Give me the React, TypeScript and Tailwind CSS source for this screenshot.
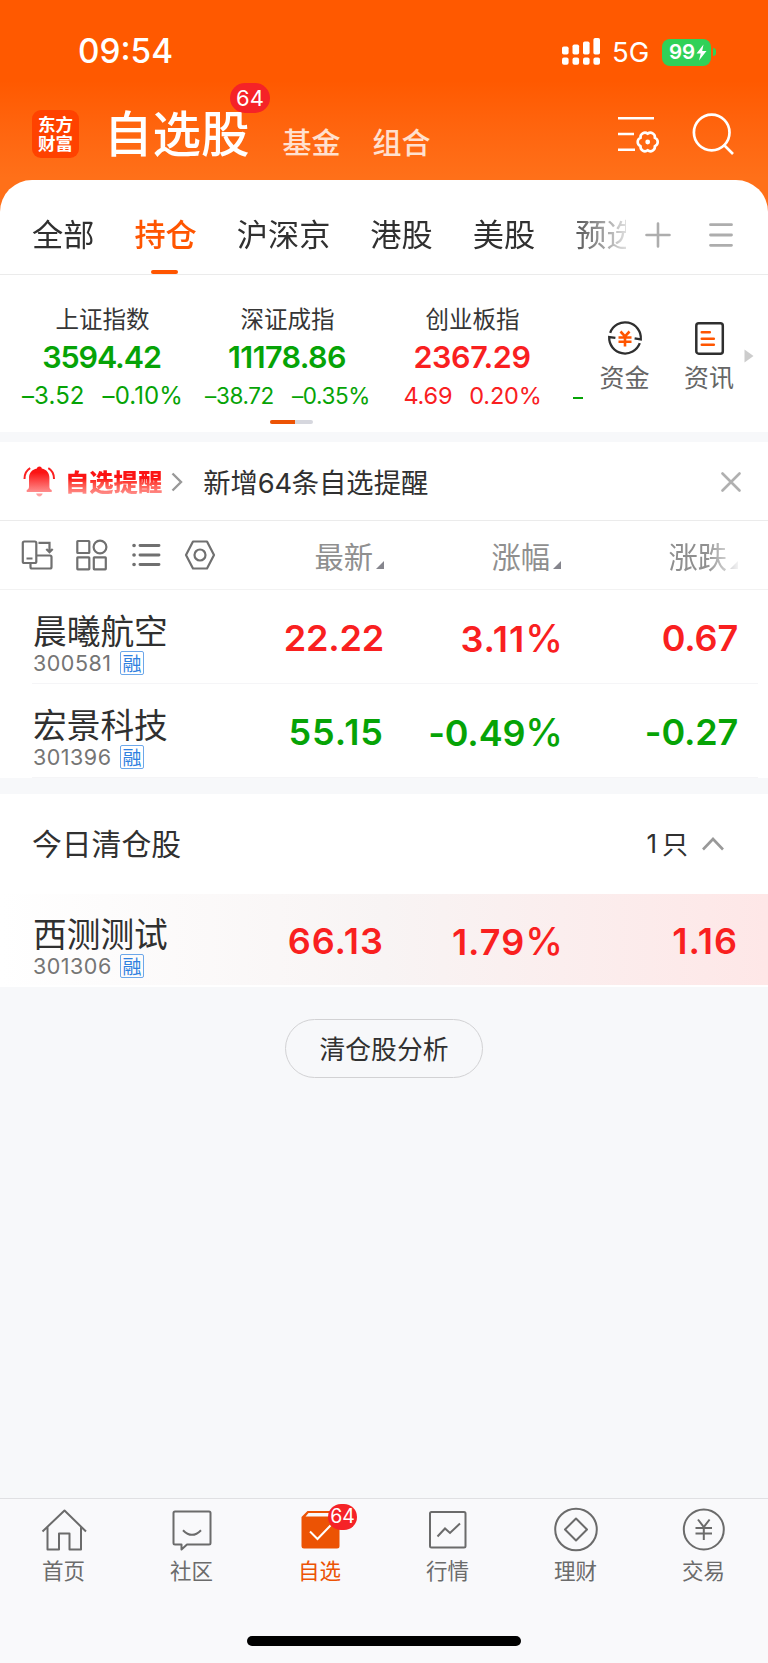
import type { ReactNode } from 'react'

type Trend = 'up' | 'down'

interface Stock {
  name: string
  code: string
  price: string
  percent: string
  change: string
  trend: Trend
}

const TREND_COLORS: Record<Trend, string> = {
  up: 'text-[#f9201f]',
  down: 'text-[#06a306]',
}

const TABS = ['全部', '持仓', '沪深京', '港股', '美股', '预选']

const INDICES: {
  name: string
  value: string
  change: string
  percent: string
  trend: Trend
  valueClass: string
  changeClass: string
}[] = [
  {
    name: '上证指数',
    value: '3594.42',
    change: '–3.52',
    percent: '–0.10%',
    trend: 'down',
    valueClass: 'tracking-[-1.1px] pr-[2px]',
    changeClass: 'gap-[18px] text-[24px] tracking-[0.1px]',
  },
  {
    name: '深证成指',
    value: '11178.86',
    change: '–38.72',
    percent: '–0.35%',
    trend: 'down',
    valueClass: 'tracking-[-0.6px] pr-px',
    changeClass: 'gap-[18px] text-[22.5px] tracking-[-0.4px]',
  },
  {
    name: '创业板指',
    value: '2367.29',
    change: '4.69',
    percent: '0.20%',
    trend: 'up',
    valueClass: 'tracking-[-0.4px] pr-px',
    changeClass: 'gap-[17px] text-[23.5px] tracking-[-0.2px]',
  },
]

const HOLDINGS: Stock[] = [
  { name: '晨曦航空', code: '300581', price: '22.22', percent: '3.11', change: '0.67', trend: 'up' },
  { name: '宏景科技', code: '301396', price: '55.15', percent: '-0.49', change: '-0.27', trend: 'down' },
]

const CLEARED: Stock = {
  name: '西测测试',
  code: '301306',
  price: '66.13',
  percent: '1.79',
  change: '1.16',
  trend: 'up',
}

function StatusBar() {
  return (
    <div className="flex h-[104px] items-center pl-[78px] text-white font-['Inter',sans-serif]">
      <span className="w-[484px] text-[33.3px] leading-none font-medium">09:54</span>
      <svg width="38" height="28" viewBox="0 0 38 28" fill="#fff">
        <rect x="0" y="8.5" width="6.6" height="8" rx="1.8" />
        <rect x="10.5" y="6.5" width="6.6" height="10" rx="1.8" />
        <rect x="21" y="3.5" width="6.6" height="13" rx="1.8" />
        <rect x="31.4" y="0" width="6.6" height="16.5" rx="1.8" />
        <rect x="0" y="19.5" width="6.6" height="7.2" rx="2" />
        <rect x="10.5" y="19.5" width="6.6" height="7.2" rx="2" />
        <rect x="21" y="19.5" width="6.6" height="7.2" rx="2" />
        <rect x="31.4" y="19.5" width="6.6" height="7.2" rx="2" />
      </svg>
      <span className="ml-[12px] w-[50px] pt-px text-[27.5px] leading-none">5G</span>
      <div className="flex h-[27px] w-[49px] items-center justify-center rounded-[8px] bg-[#30d158]">
        <span className="ml-[3px] text-[20.5px] leading-none font-semibold">99</span>
        <svg width="11" height="17" viewBox="0 0 11 17" fill="#fff" className="ml-px">
          <path d="M7.5 0.5 0.5 9.5h4.2L3 16.5l7.5-9.6H6.2z" />
        </svg>
      </div>
      <div className="ml-[2px] h-[8px] w-[3px] rounded-r-full bg-[#30d158]" />
    </div>
  )
}

function TitleBar() {
  return (
    <div className="flex h-[76px] items-start pl-8 text-white">
      <div className="mt-[6px] flex h-[48px] w-[47px] flex-col items-center justify-center rounded-[9px] bg-[#ff4200] pb-[2px] text-[17.5px] leading-[19.5px] font-bold">
        <span>东方</span>
        <span>财富</span>
      </div>
      <div className="relative ml-[25px]">
        <h1 className="mt-px text-[48.5px] leading-[52px] font-medium whitespace-nowrap">自选股</h1>
        <span className="absolute -top-[21px] left-[126px] flex h-[30px] w-[40px] items-center justify-center rounded-full bg-[#f52327] text-[22px] leading-none font-['Inter',sans-serif]">
          64
        </span>
      </div>
      <span className="mt-[21px] ml-[33px] text-[29px] leading-[32px] font-medium text-white/80">基金</span>
      <span className="mt-[21px] ml-[32px] text-[29px] leading-[32px] font-medium text-white/80">组合</span>
      <svg
        className="mt-[9px] ml-[187px]"
        width="42"
        height="42"
        viewBox="0 0 42 42"
        fill="none"
        stroke="#fff"
        strokeWidth="2.6"
      >
        <path d="M0 5.3h36M0 21h16M0 36.8h17" />
        <path
          transform="translate(29.7 29)"
          strokeLinejoin="round"
          d="M7.1-4.1C11-2.7 11 2.7 7.1 4.1C7.9 8.1 3.1 10.9 0 8.2C-3.1 10.9-7.9 8.1-7.1 4.1C-11 2.7-11-2.7-7.1-4.1C-7.9-8.1-3.1-10.9 0-8.2C3.1-10.9 7.9-8.1 7.1-4.1z"
        />
        <circle cx="29.7" cy="29" r="2.4" fill="#fff" stroke="none" />
      </svg>
      <svg
        className="mt-[9px] ml-[32px]"
        width="42"
        height="42"
        viewBox="0 0 42 42"
        fill="none"
        stroke="#fff"
        strokeWidth="2.7"
      >
        <circle cx="19.7" cy="19.5" r="17.8" />
        <path d="M31.5 31.5 41 41" />
      </svg>
    </div>
  )
}

function TabBar() {
  return (
    <div className="flex h-[95px] items-center border-b border-[#ebebeb] pl-8">
      <div className="flex h-full w-[594px] gap-[40px] overflow-hidden [mask-image:linear-gradient(to_right,#000_530px,transparent_606px)]">
        {TABS.map((tab) => (
          <div
            key={tab}
            className={`relative flex h-full shrink-0 items-center pb-[2px] text-[31.2px] leading-none ${
              tab === '持仓' ? 'font-medium text-[#ff5500]' : 'text-[#303030]'
            }`}
          >
            <span className="pt-[14px]">{tab}</span>
            {tab === '持仓' && (
              <span className="absolute bottom-0 left-[17px] h-[4px] w-[27px] rounded-full bg-[#ff5500]" />
            )}
          </div>
        ))}
      </div>
      <svg className="mt-[15px] ml-[19px]" width="26" height="26" viewBox="0 0 26 26" stroke="#adadad" strokeWidth="2.6" strokeLinecap="round">
        <path d="M1.5 13h23M13 1.5v23" />
      </svg>
      <svg className="mt-[15px] ml-[38px]" width="24" height="26" viewBox="0 0 24 26" stroke="#adadad" strokeWidth="2.8" strokeLinecap="round">
        <path d="M1.5 2.7h21M1.5 13h21M1.5 23.3h21" />
      </svg>
    </div>
  )
}

function IndexPanel() {
  return (
    <div className="flex h-[157px] pl-[10px]">
      <div className="relative flex h-full w-[573px] overflow-hidden">
        {INDICES.map((item) => (
          <div key={item.name} className="flex w-[185px] shrink-0 flex-col items-center pt-[30px] whitespace-nowrap">
            <div className="text-[23.5px] leading-[26px] text-[#363636]">{item.name}</div>
            <div
              className={`mt-[9px] text-[30.5px] leading-[34px] font-semibold font-['Inter',sans-serif] ${item.valueClass} ${TREND_COLORS[item.trend]}`}
            >
              {item.value}
            </div>
            <div
              className={`mt-[9px] flex leading-[26px] font-['Inter',sans-serif] ${item.changeClass} ${TREND_COLORS[item.trend]}`}
            >
              <span>{item.change}</span>
              <span>{item.percent}</span>
            </div>
          </div>
        ))}
        <span className="mt-[122px] ml-[8px] h-[2px] w-[10px] self-start bg-[#06a306]" />
        <div className="absolute top-[145px] left-[260px] flex h-[4px] w-[43px] overflow-hidden rounded-full bg-[#d6d7de]">
          <div className="w-[25px] bg-[#ec5304]" />
        </div>
      </div>
      <div className="ml-[17px] flex w-[50px] flex-col items-center pt-[45px] text-[25px] leading-[28px] whitespace-nowrap text-[#666]">
        <svg width="36" height="36" viewBox="0 0 36 36" fill="none" strokeWidth="2.3">
          <path stroke="#2f2f2f" d="M3.2 12.8A15.8 15.8 0 0 1 33.8 19.5L27.6 18.3M32.8 23.2A15.8 15.8 0 0 1 2.2 17L8.4 17.9" />
          <path stroke="#ff5500" strokeWidth="2.6" d="M13.5 11.5 18 16.3l4.5-4.8M11.5 17.5h13M11.5 21.7h13M18 16v10.5" />
        </svg>
        <span className="mt-[6px] mr-px">资金</span>
      </div>
      <div className="ml-[34px] flex w-[50px] flex-col items-center pt-[45px] text-[25px] leading-[28px] whitespace-nowrap text-[#666]">
        <svg width="36" height="36" viewBox="0 0 36 36" fill="none">
          <rect x="5.3" y="3.3" width="26.5" height="30.4" rx="2.5" stroke="#2f2f2f" strokeWidth="2.5" />
          <path stroke="#ff5500" strokeWidth="2.6" strokeLinecap="round" d="M10.8 12.3h8M10.8 18.7h12M10.8 24.7h12" />
        </svg>
        <span className="mt-[6px]">资讯</span>
      </div>
      <svg className="mt-[74px] ml-[10px]" width="10" height="14" viewBox="0 0 10 14">
        <path d="M0.5 0.5 9.5 7 0.5 13.5z" fill="#ccc" />
      </svg>
    </div>
  )
}

function AlertBar() {
  return (
    <div className="flex h-[79px] items-center border-b border-[#ebebeb] bg-white pt-[2px] pl-[23px]">
      <svg width="32" height="32" viewBox="0 0 32 32" fill="none">
        <defs>
          <linearGradient id="bell" x1="0" y1="0" x2="0" y2="1">
            <stop offset="0.2" stopColor="#fb1414" />
            <stop offset="1" stopColor="#ffa9a9" />
          </linearGradient>
        </defs>
        <path
          fill="url(#bell)"
          d="M16.5 0.5c1.4 0 2.2 0.8 2.3 2 4.8 1 7.6 4.4 7.6 9.3v8.7c0 1.8 0.7 2.8 2.3 3.6v1.8H3.7v-1.8c1.6-0.8 2.3-1.8 2.3-3.6v-8.7c0-4.9 3-8.3 7.9-9.3 0.2-1.2 1.2-2 2.6-2zM13.2 27.5h6.4c-0.4 1.8-1.5 2.9-3.2 2.9s-2.8-1.1-3.2-2.9z"
        />
        <path stroke="#fb2020" strokeWidth="2" d="M1.5 13C1.5 8 3.7 4.2 7.2 2.2M31 13C31 8 28.8 4.2 25.3 2.2" />
      </svg>
      <span className="ml-[10px] bg-linear-to-b from-[#fb1414] from-40% to-[#ff9c9c] bg-clip-text pb-[2px] text-[24.3px] leading-[28px] font-black text-transparent">
        自选提醒
      </span>
      <svg className="ml-[9px]" width="12" height="20" viewBox="0 0 12 20" fill="none" stroke="#999" strokeWidth="2.4">
        <path d="M1.5 1.5 10 10 1.5 18.5" />
      </svg>
      <span className="ml-[20px] w-[518px] text-[27.3px] leading-[32px] whitespace-nowrap text-[#303030]">
        新增<span className="tracking-[-0.3px] font-['Inter',sans-serif]">64</span>条自选提醒
      </span>
      <svg width="20" height="20" viewBox="0 0 20 20" stroke="#b0b0b0" strokeWidth="2.6" strokeLinecap="round">
        <path d="M1.5 1.5l17 17M18.5 1.5l-17 17" />
      </svg>
    </div>
  )
}

function SortHeading({ label, className = '' }: { label: string; className?: string }) {
  return (
    <div className={`flex items-center justify-end ${className}`}>
      <span className="mr-[3px] pb-px text-[29.3px] leading-[34px] whitespace-nowrap">{label}</span>
      <svg className="mt-[20px]" width="8" height="8" viewBox="0 0 8 8">
        <path d="M8 0v8H0z" fill="#85858d" />
      </svg>
    </div>
  )
}

function ColumnHeader() {
  return (
    <div className="flex h-[69px] items-center border-b border-[#f2f2f2] bg-white pl-[20px] text-[#8f8f8f]">
      <div className="flex w-[196px] items-center justify-between">
        <svg width="34" height="32" viewBox="0 0 34 32" fill="none" stroke="#707070" strokeWidth="2.2">
          <rect x="2.8" y="2.5" width="13.5" height="21.5" rx="1.5" />
          <path d="M6.5 19.5h6M18.5 3.8h11v9M26.3 10l3.2 3.2 3.2-3.2" />
          <path d="M10.5 24.5V28q0 1.5 1.5 1.5h18q1.5 0 1.5-1.5V18q0-1.5-1.5-1.5H16.5" />
        </svg>
        <svg width="32" height="32" viewBox="0 0 32 32" fill="none" stroke="#707070" strokeWidth="2.2">
          <rect x="1.3" y="2" width="12" height="12" rx="0.5" />
          <circle cx="24" cy="8" r="6.4" />
          <rect x="1.3" y="18.3" width="12" height="12" rx="0.5" />
          <rect x="17.8" y="18.3" width="12" height="12" rx="0.5" />
        </svg>
        <svg width="32" height="32" viewBox="0 0 32 32" stroke="#707070" strokeWidth="2.9" strokeLinecap="round">
          <path d="M10 6.5h19M10 16h19M10 25.5h19" />
          <path strokeWidth="3.6" d="M4 6.5h.1M4 16h.1M4 25.5h.1" />
        </svg>
        <svg width="32" height="32" viewBox="0 0 32 32" fill="none" stroke="#707070" strokeWidth="2.2">
          <path strokeLinejoin="round" d="M9 2.5h14L30 16l-7 13.5H9L2 16z" />
          <circle cx="16" cy="16" r="5.5" />
        </svg>
      </div>
      <SortHeading label="最新" className="w-[168px]" />
      <SortHeading label="涨幅" className="w-[177px]" />
      <SortHeading
        label="涨跌"
        className="w-[177px] [mask-image:linear-gradient(to_right,#000_145px,rgba(0,0,0,0.1)_177px)]"
      />
    </div>
  )
}

// Inter's "1" is narrow, so numbers that hold one are spaced out a little
function spacing(value: string) {
  return value.includes('1') ? 'tracking-[1px]' : 'tracking-[-0.2px]'
}

function StockCells({ stock }: { stock: Stock }) {
  return (
    <>
      <div className="w-[150px] pt-[22px] pl-px">
        <div className="text-[33.7px] leading-[34px] whitespace-nowrap text-[#303030]">{stock.name}</div>
        <div className="mt-[4px] flex items-center">
          <span className="w-[87px] text-[21.5px] leading-[24px] tracking-[0.5px] text-[#757575] font-['Inter',sans-serif]">
            {stock.code}
          </span>
          <span className="flex h-[24px] w-[24px] items-center justify-center rounded-[2px] border border-[#6ca7ea] pb-[2px] text-[19px] leading-none text-[#2f80e0]">
            融
          </span>
        </div>
      </div>
      <div
        className={`flex pt-[26px] text-right text-[36px] leading-[42px] font-semibold font-['Inter',sans-serif] ${TREND_COLORS[stock.trend]}`}
      >
        <span className={`w-[202px] ${spacing(stock.price)}`}>{stock.price}</span>
        <span className={`w-[179px] ${spacing(stock.percent)}`}>
          {stock.percent}
          <span className="text-[38px] font-medium tracking-normal">%</span>
        </span>
        <span className={`w-[175px] ${spacing(stock.change)}`}>{stock.change}</span>
      </div>
    </>
  )
}

function TabIcon({ children }: { children: ReactNode }) {
  return (
    <svg width="46" height="46" viewBox="0 0 46 46" fill="none" stroke="#6b6b6b" strokeWidth="2">
      {children}
    </svg>
  )
}

const NAV_ITEMS: { label: string; icon: ReactNode; badge?: string }[] = [
  {
    label: '首页',
    icon: <path strokeLinejoin="round" d="M1.5 24.5 23.5 3.5l21.5 21M6.5 20v22.5H18v-16h10.5v16H40V20" />,
  },
  {
    label: '社区',
    icon: (
      <>
        <path strokeLinejoin="round" d="M6 4.5h34q1.5 0 1.5 1.5v30q0 1.5-1.5 1.5H18l-5.5 5v-5H6Q4.5 37.5 4.5 36V6q0-1.5 1.5-1.5z" />
        <path d="M14 23.2q9 9.3 18 0" />
      </>
    ),
  },
  {
    label: '自选',
    icon: (
      <>
        <path fill="#ec5304" stroke="none" d="M10.5 4H41q1.5 0 1.5 1.5V39q0 2.5-2.5 2.5H7q-2.5 0-2.5-2.5V10z" />
        <path fill="#f9f9fb" stroke="none" d="M11.5 6H39v3.5H8.5z" />
        <path stroke="#fff" d="M13 24.5l7.5 7.5 13-13.5" />
      </>
    ),
    badge: '64',
  },
  {
    label: '行情',
    icon: (
      <>
        <rect x="5" y="5" width="35.5" height="35.5" rx="1.5" />
        <path d="M12.5 29.5 20 21.5l5 4.5 10-9.5" />
      </>
    ),
  },
  {
    label: '理财',
    icon: (
      <>
        <circle cx="23" cy="22.5" r="20.8" />
        <path strokeLinejoin="round" d="M23 11.5l11 11-11 11-11-11z" />
      </>
    ),
  },
  {
    label: '交易',
    icon: (
      <>
        <circle cx="22.8" cy="22.5" r="20" />
        <path d="M17 12.5l5.8 7.5 5.8-7.5M14.5 21H31M14.5 26.5H31M22.8 20v13" />
      </>
    ),
  },
]

function BottomNav() {
  return (
    <nav className="h-[165px] border-t border-[#e0e0e3] bg-[#f9f9fb]">
      <div className="grid h-[137px] grid-cols-6">
        {NAV_ITEMS.map((item) => (
          <div key={item.label} className="relative flex flex-col items-center pt-[8px]">
            <TabIcon>{item.icon}</TabIcon>
            <span
              className={`mt-[5px] mr-px text-[21.5px] leading-[24px] ${item.badge ? 'text-[#ec5304]' : 'text-[#6b6b6b]'}`}
            >
              {item.label}
            </span>
            {item.badge && (
              <span className="absolute top-[5px] left-[72px] flex h-[26px] w-[29px] items-center justify-center rounded-full bg-[#f52327] text-[19.5px] leading-none text-white font-['Inter',sans-serif]">
                {item.badge}
              </span>
            )}
          </div>
        ))}
      </div>
      <div className="mx-auto h-[10px] w-[274px] rounded-full bg-black" />
    </nav>
  )
}

export default function App() {
  return (
    <div className="flex h-[1663px] w-[768px] flex-col overflow-hidden bg-[#f7f8fa] font-['Noto_Sans_CJK_SC',sans-serif]">
      <header className="h-[212px] shrink-0 bg-linear-to-b from-[#ff5900] from-38% to-[#ff7019] to-84%">
        <StatusBar />
        <TitleBar />
      </header>
      <section className="-mt-8 shrink-0 rounded-t-[32px] bg-white">
        <TabBar />
        <IndexPanel />
      </section>

      <section className="mt-[10px] shrink-0">
        <AlertBar />
        <ColumnHeader />
        {HOLDINGS.map((stock) => (
          <div key={stock.code} className="h-[94px] bg-white pr-[10px] pl-8">
            <div className="flex h-full border-b border-[#f5f5f7] pt-px">
              <StockCells stock={stock} />
            </div>
          </div>
        ))}
      </section>

      <section className="mt-[16px] shrink-0 bg-white">
        <div className="flex h-[100px] items-center pr-[44px] pl-8 text-[#303030]">
          <span className="flex-1 pb-[2px] text-[29.8px] leading-none">今日清仓股</span>
          <span className="mr-[14px] flex items-center pb-px text-[26px] leading-none">
            <span className="mr-[5px] font-['Inter',sans-serif]">1</span>
            <span className="pb-[2px]">只</span>
          </span>
          <svg width="22" height="14" viewBox="0 0 22 14" fill="none" stroke="#999" strokeWidth="2.6">
            <path d="M1 12.5 11 2l10 10.5" />
          </svg>
        </div>
        <div className="flex h-[91px] bg-linear-to-r from-white via-[#f8f4f4] to-[#fee7e7] pl-8">
          <StockCells stock={CLEARED} />
        </div>
        <div className="h-[2px]" />
      </section>

      <div className="flex flex-1 items-start justify-center pt-[32px]">
        <button className="h-[59px] w-[198px] rounded-full border border-[#d2d2d4] pb-px text-[25.8px] leading-none text-[#303030]">
          清仓股分析
        </button>
      </div>

      <BottomNav />
    </div>
  )
}
